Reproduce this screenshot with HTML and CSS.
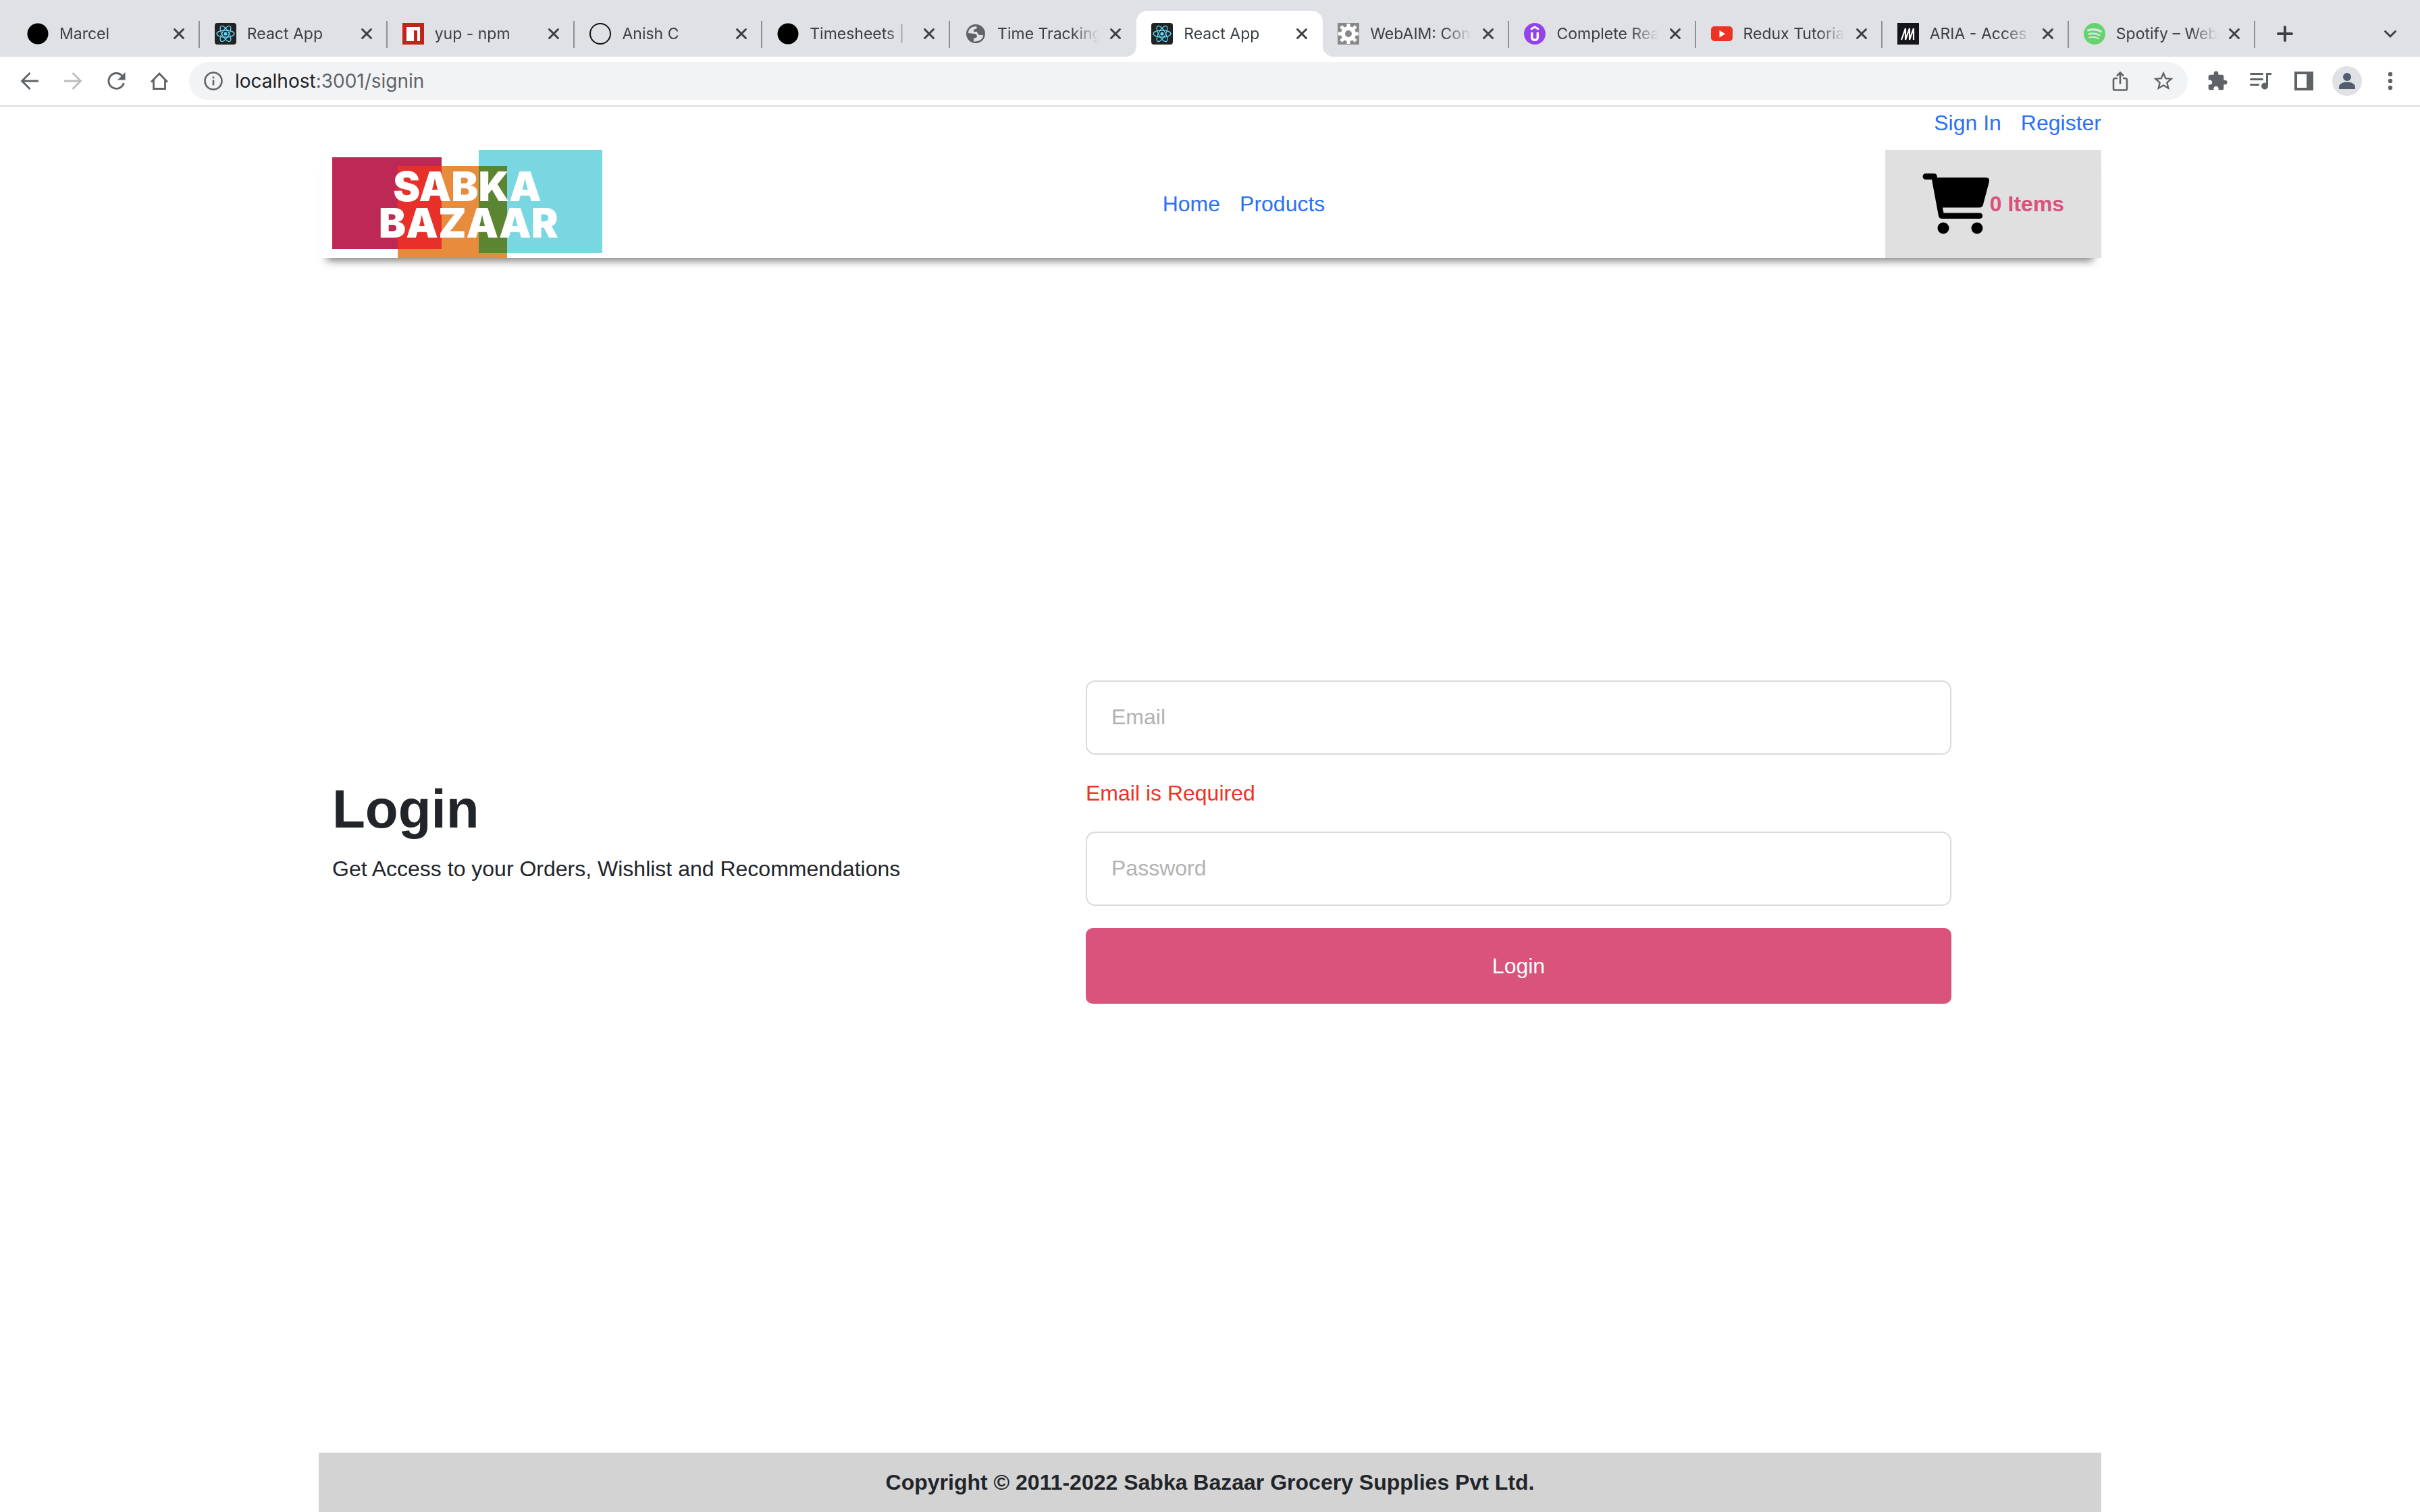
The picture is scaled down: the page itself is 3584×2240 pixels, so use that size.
FILE: index.html
```html
<!DOCTYPE html>
<html lang="en">
<head>
<meta charset="utf-8">
<meta name="viewport" content="width=device-width, initial-scale=1">
<title>React App</title>
<link rel="stylesheet" href="styles.css">
</head>
<body>
<svg class="defs" aria-hidden="true">
  <symbol id="close" viewBox="0 0 18 18"><path d="M2.500 2.500l13 13M15.500 2.500l-13 13" fill="none" stroke="currentColor" stroke-width="3" stroke-linecap="round"/></symbol>
  <symbol id="react" viewBox="0 0 32 32"><rect width="32" height="32" rx="4" fill="#222"/><g fill="none" stroke="#61dafb" stroke-width="1.300"><ellipse cx="16" cy="16" rx="13" ry="5"/><ellipse cx="16" cy="16" rx="13" ry="5" transform="rotate(60 16 16)"/><ellipse cx="16" cy="16" rx="13" ry="5" transform="rotate(120 16 16)"/></g><circle cx="16" cy="16" r="2.600" fill="#61dafb"/></symbol>
</svg>
<header class="browser">
  <div class="tabstrip">
    <ul class="tabs">
      <li class="tab tab-wide"><svg class="favicon" viewBox="0 0 32 32"><circle cx="16" cy="16" r="15.500"/></svg><span class="tab-title">Marcel</span><button class="close" aria-label="Close tab"><svg><use href="#close"/></svg></button></li>
      <li class="tab tab-wide"><svg class="favicon"><use href="#react"/></svg><span class="tab-title">React App</span><button class="close" aria-label="Close tab"><svg><use href="#close"/></svg></button></li>
      <li class="tab tab-wide"><svg class="favicon" viewBox="0 0 32 32"><path fill="#bf2519" d="M0 0h32v32H0z"/><path fill="#fff" d="M6 6h20v21h-4V11h-5v16H6z"/></svg><span class="tab-title">yup - npm</span><button class="close" aria-label="Close tab"><svg><use href="#close"/></svg></button></li>
      <li class="tab tab-wide"><svg class="favicon" viewBox="0 0 32 32"><circle cx="16" cy="16" r="15" fill="none" stroke="#111" stroke-width="2"/></svg><span class="tab-title">Anish C</span><button class="close" aria-label="Close tab"><svg><use href="#close"/></svg></button></li>
      <li class="tab tab-wide"><svg class="favicon" viewBox="0 0 32 32"><circle cx="16" cy="16" r="15.500"/></svg><span class="tab-title">Timesheets |</span><button class="close" aria-label="Close tab"><svg><use href="#close"/></svg></button></li>
      <li class="tab tab-plain"><svg class="favicon" viewBox="0 0 32 32"><circle cx="16" cy="16" r="14" fill="#5f6368"/><path fill="#dfe1e5" d="M5 15C5 9 10 5 17 5l1 3-5 2v3h5q1 5 5 5h4c0 6-6 10-14 9.500v-5q5 0 5-3.500-1-3-4-3z"/></svg><span class="tab-title">Time Tracking</span><button class="close" aria-label="Close tab"><svg><use href="#close"/></svg></button></li>
      <li class="tab tab-active" aria-current="page"><svg class="favicon"><use href="#react"/></svg><span class="tab-title">React App</span><button class="close" aria-label="Close tab"><svg><use href="#close"/></svg></button></li>
      <li class="tab"><svg class="favicon" viewBox="0 0 32 32"><path fill="#888" d="M0 0h32v32H0z"/><g stroke="#fff" stroke-width="5"><path d="M16 1v30M1 16h30M5 5l22 22M27 5L5 27"/></g><circle cx="16" cy="16" r="11" fill="#fff"/><circle cx="16" cy="16" r="5" fill="#888"/></svg><span class="tab-title">WebAIM: Con</span><button class="close" aria-label="Close tab"><svg><use href="#close"/></svg></button></li>
      <li class="tab"><svg class="favicon" viewBox="0 0 32 32"><circle cx="16" cy="16" r="16" fill="#9442ea"/><path fill="none" stroke="#fff" stroke-width="3" d="M10 9.500l6-3.500 6 3.500"/><path fill="none" stroke="#fff" stroke-width="3.400" d="M11.700 14v7.500c0 5 8.600 5 8.600 0V14"/></svg><span class="tab-title">Complete Rea</span><button class="close" aria-label="Close tab"><svg><use href="#close"/></svg></button></li>
      <li class="tab"><svg class="favicon" viewBox="0 0 32 32"><rect y="5" width="32" height="22" rx="5" fill="#ee3224"/><path fill="#fff" d="M12.500 11v10.500l8.500-5.200z"/></svg><span class="tab-title">Redux Tutoria</span><button class="close" aria-label="Close tab"><svg><use href="#close"/></svg></button></li>
      <li class="tab"><svg class="favicon" viewBox="0 0 32 32"><path fill="#15141a" d="M0 0h32v32H0z"/><path fill="none" stroke="#fff" stroke-width="2.200" d="M6 25l6-17v17l6-17v17l6-17v17"/></svg><span class="tab-title">ARIA - Acces</span><button class="close" aria-label="Close tab"><svg><use href="#close"/></svg></button></li>
      <li class="tab"><svg class="favicon" viewBox="0 0 32 32"><circle cx="16" cy="16" r="16" fill="#65d46e"/><g fill="none" stroke="#dfe1e5" stroke-linecap="round"><path stroke-width="3.200" d="M6.500 11c6-2 13.500-1.500 19 1.700"/><path stroke-width="2.600" d="M7.500 16.500c5-1.500 11-1 16 1.700"/><path stroke-width="2.200" d="M8.500 21.500c4-1 9-.8 13.500 1.700"/></g></svg><span class="tab-title">Spotify – Web</span><button class="close" aria-label="Close tab"><svg><use href="#close"/></svg></button></li>
    </ul>
    <button class="new-tab" aria-label="New tab"><svg viewBox="0 0 24 24"><path d="M12 2v20M2 12h20" stroke="currentColor" stroke-width="4" stroke-linecap="round"/></svg></button>
    <button class="tool tab-search" aria-label="Search tabs"><svg viewBox="0 0 32 32"><path fill="none" stroke="currentColor" stroke-width="3" stroke-linecap="round" d="M8.500 12.500l7.500 7.500 7.500-7.500"/></svg></button>
  </div>
  <div class="toolbar">
    <button class="tool" aria-label="Back"><svg viewBox="0 0 32 32"><path fill="none" stroke="currentColor" stroke-width="2.800" d="M29 16H5M16.500 4L4.500 16l12 12"/></svg></button>
    <button class="tool tool-off" aria-label="Forward"><svg viewBox="0 0 32 32"><path fill="none" stroke="currentColor" stroke-width="2.800" d="M3 16h24M15.500 4l12 12-12 12"/></svg></button>
    <button class="tool" aria-label="Reload"><svg viewBox="0 0 32 32"><path fill="none" stroke="currentColor" stroke-width="2.800" d="M25 8.500A11.400 11.400 0 1 0 27.300 19"/><path fill="currentColor" d="M29.500 3v11.500H18z"/></svg></button>
    <button class="tool" aria-label="Home"><svg viewBox="0 0 32 32"><path fill="none" stroke="currentColor" stroke-width="2.800" d="M4 17.500L16 5l12 12.500M7.500 14.500V27.500h17V14.500"/></svg></button>
    <div class="omnibox">
      <svg class="info" viewBox="0 0 28 28"><circle cx="14" cy="14" r="12.500" fill="none" stroke="currentColor" stroke-width="2.600"/><path stroke="currentColor" stroke-width="2.600" d="M14 12.500v8M14 7.500v2.800"/></svg>
      <div class="url" role="textbox" aria-label="Address" contenteditable="true" spellcheck="false"><span class="host">localhost</span>:3001/signin</div>
      <button class="tool" aria-label="Share"><svg viewBox="0 0 32 32"><path fill="none" stroke="currentColor" stroke-width="2.600" d="M12 12H8.500q-2.500 0-2.500 2.500v13q0 2 2.500 2h15q2.500 0 2.500-2v-13q0-2.500-2.500-2.500H20M16 20.500V4M11 8.500l5-5 5 5"/></svg></button>
      <button class="tool" aria-label="Bookmark"><svg viewBox="1 1 22 22"><path fill="currentColor" d="M22 9.240l-7.190-.62L12 2 9.190 8.630 2 9.240l5.460 4.730L5.820 21 12 17.270 18.180 21l-1.630-7.030L22 9.240zM12 15.400l-3.760 2.270 1-4.280-3.320-2.880 4.380-.38L12 6.100l1.710 4.040 4.380.38-3.320 2.880 1 4.280L12 15.400z"/></svg></button>
    </div>
    <button class="tool" aria-label="Extensions"><svg viewBox="0 0 24 24"><path fill="currentColor" d="M20.500 11H19V7c0-1.100-.9-2-2-2h-4V3.500C13 2.120 11.880 1 10.500 1S8 2.120 8 3.500V5H4c-1.100 0-1.990.9-1.990 2v3.800H3.500c1.490 0 2.700 1.210 2.700 2.700s-1.210 2.700-2.700 2.700H2V20c0 1.100.9 2 2 2h3.800v-1.500c0-1.490 1.210-2.700 2.700-2.700s2.700 1.210 2.700 2.700V22H17c1.100 0 2-.9 2-2v-4h1.500c1.380 0 2.500-1.120 2.500-2.500S21.880 11 20.500 11z"/></svg></button>
    <button class="tool" aria-label="Media"><svg viewBox="0 0 32 32"><path stroke="currentColor" stroke-width="3" stroke-linecap="round" d="M1.500 5.500h17M1.500 13.500h17M1.500 21.500h11"/><path fill="currentColor" d="M24 4h8v3h-5v16.500a5 5 0 1 1-3-4.500z"/></svg></button>
    <button class="tool" aria-label="Side panel"><svg viewBox="0 0 32 32"><path fill="currentColor" fill-rule="evenodd" d="M2 2h28v28H2zM6 6v20h14V6z"/></svg></button>
    <button class="avatar" aria-label="Profile"><svg viewBox="0 0 44 44"><circle cx="22" cy="16" r="6"/><path d="M10 34v-3c0-5 6-7.500 12-7.500s12 2.500 12 7.500v3z"/></svg></button>
    <button class="tool" aria-label="Menu"><svg viewBox="0 0 32 32"><g fill="currentColor"><circle cx="16" cy="6" r="3.200"/><circle cx="16" cy="16" r="3.200"/><circle cx="16" cy="26" r="3.200"/></g></svg></button>
  </div>
</header>
<div class="page">
  <nav class="account" aria-label="Account"><a href="#signin">Sign In</a><a href="#register">Register</a></nav>
  <header class="site-header">
    <a class="logo" href="#home" aria-label="Sabka Bazaar">
      <svg viewBox="0 0 400 160">
        <path fill="#be2854" d="M0 11h162v136H0z"/><path fill="#e78b3d" d="M97 24h162v136H97z"/><path fill="#79d7e1" d="M217 0h183v153H217z"/>
        <path fill="#e7302a" d="M97 24h65v123H97z"/><path fill="#5c8532" d="M217 24h42v129h-42z"/>
        <text class="logo-text" x="200" y="76">SABKA</text><text class="logo-text" x="202" y="130">BAZAAR</text>
      </svg>
    </a>
    <nav class="menu" aria-label="Main"><a href="#home">Home</a><a href="#products">Products</a></nav>
    <button class="cart">
      <svg viewBox="0 0 100 90"><path d="M5 0h12q3.500 0 4.500 3l.5 3h72q6 0 5 6l-9 34q-1 4.500-6 4.500H30l1.500 8H85a4.200 4.200 0 0 1 0 8.500H29q-4 0-5-4L14 9H5a4.500 4.500 0 0 1 0-9z"/><circle cx="31" cy="81" r="8.500"/><circle cx="81" cy="81" r="8.500"/></svg>
      <span>0 Items</span>
    </button>
  </header>
  <main class="login">
    <section class="intro">
      <h1>Login</h1>
      <p>Get Access to your Orders, Wishlist and Recommendations</p>
    </section>
    <form class="form" novalidate>
      <input type="email" placeholder="Email" aria-label="Email" aria-describedby="email-error">
      <p class="error" id="email-error">Email is Required</p>
      <input type="password" placeholder="Password" aria-label="Password">
      <button class="submit" type="submit">Login</button>
    </form>
  </main>
  <footer class="footer">Copyright © 2011-2022 Sabka Bazaar Grocery Supplies Pvt Ltd.</footer>
</div>
</body>
</html>
```
FILE: styles.css
```css
* { box-sizing: border-box; }
body {
  margin: 0;
  min-height: 100vh;
  display: flex;
  flex-direction: column;
  background: #fff;
  color: #212529;
  font: 32px/48px "Liberation Sans", Arial, sans-serif;
}
button { border: 0; padding: 0; background: none; font: inherit; color: inherit; cursor: pointer; }
svg { display: block; }
a { color: #2b70f6; text-decoration: none; }
h1, p { margin: 0; }
.defs { position: absolute; width: 0; height: 0; }

/* Browser tabs */
.browser { border-bottom: 2px solid #dadce0; font-family: Inter, Roboto, sans-serif; }
.tabstrip {
  display: flex;
  align-items: center;
  height: 84px;
  padding: 16px 28px 0 18px;
  background: #dfe1e5;
  color: #3c4043;
}
.tabs { display: flex; flex: 0 1 3322px; min-width: 0; height: 68px; margin: 0; padding: 0; list-style: none; }
.tab {
  position: relative;
  display: flex;
  flex: 276 1 0;
  min-width: 0;
  align-items: center;
  gap: 16px;
  padding: 0 22px;
}
.tab-wide { flex-grow: 278; }
.tab::after { content: ""; position: absolute; right: 0; top: 15px; width: 2px; height: 40px; background: #8d9094; }
.tab-active { background: #fff; border-radius: 16px 16px 0 0; }
.tab-plain::after { display: none; }
.tab-active::before, .tab-active::after {
  content: "";
  position: absolute;
  top: auto;
  bottom: 0;
  width: 16px;
  height: 16px;
}
.tab-active::before { right: 100%; background: radial-gradient(circle at 0 0, transparent 16px, #fff 16px); }
.tab-active::after { right: auto; left: 100%; background: radial-gradient(circle at 100% 0, transparent 16px, #fff 16px); }
.favicon { flex: none; width: 32px; height: 32px; }
.tab-title {
  flex: 1;
  min-width: 0;
  overflow: hidden;
  white-space: nowrap;
  font-size: 23px;
  line-height: 32px;
  -webkit-mask: linear-gradient(to left, transparent, #000 40px);
  mask: linear-gradient(to left, transparent, #000 40px);
}
.close { flex: none; }
.close svg { width: 18px; height: 18px; }
.new-tab { margin-left: 32px; }
.new-tab svg { width: 24px; height: 24px; }
.tab-search { margin-left: auto; }

/* Address bar */
.toolbar { display: flex; align-items: center; gap: 32px; height: 72px; padding: 0 28px; color: #5f6368; }
.tool { flex: none; }
.tool svg { width: 32px; height: 32px; }
.tool-off { color: #babcbe; }
.omnibox {
  display: flex;
  flex: 1;
  align-items: center;
  gap: 32px;
  height: 56px;
  margin: 0 -4px 0 -4px;
  padding: 0 20px 0 22px;
  border-radius: 28px;
  background: #f1f3f4;
}
.info { flex: none; width: 28px; height: 28px; }
.url { flex: 1; margin-left: -14px; font-size: 28px; line-height: 40px; white-space: nowrap; outline: 0; }
.host { color: #202124; }
.avatar { width: 44px; height: 44px; margin: 0 -6px; border-radius: 50%; background: #dfe1e5; }
.avatar svg { fill: #515c70; }

/* Site */
.page { display: flex; flex: 1; flex-direction: column; width: 100%; max-width: 2640px; margin: 0 auto; }
.account { display: flex; justify-content: flex-end; gap: 29px; margin-bottom: 16px; }
.site-header {
  display: flex;
  align-items: center;
  justify-content: space-between;
  padding-left: 20px;
  background: #fff;
  box-shadow: 0 16px 12px -12px #777;
}
.logo svg { width: 400px; height: 160px; }
.logo-text { font: 900 60px Inter, sans-serif; fill: #fff; text-anchor: middle; }
.menu { display: flex; gap: 29px; }
.cart {
  display: flex;
  align-items: center;
  justify-content: center;
  width: 320px;
  height: 160px;
  background: #e0e0e0;
  color: #d8527b;
  font-weight: bold;
}
.cart svg { width: 100px; height: 90px; fill: #000; }
.login {
  display: grid;
  flex: 1;
  grid-template-columns: 1116fr 1282fr 202fr;
  align-items: center;
  align-content: center;
  padding: 0 20px 40px;
}
.intro { padding-bottom: 32px; }
.intro h1 { margin-bottom: 16px; font-size: 80px; line-height: 96px; }
.form { display: flex; flex-direction: column; gap: 33px; }
.form input {
  width: 100%;
  height: 110px;
  padding: 0 36px;
  border: 2px solid #dadae0;
  border-radius: 14px;
  background: #fff;
  color: #212529;
  font: inherit;
}
.form input::placeholder { color: #b2b2b2; opacity: 1; }
.error { color: #ee3224; }
.submit { height: 112px; border-radius: 10px; background: #d9537a; color: #fff; }
.footer { padding: 20px; background: #d3d3d3; font-weight: bold; text-align: center; }
```
